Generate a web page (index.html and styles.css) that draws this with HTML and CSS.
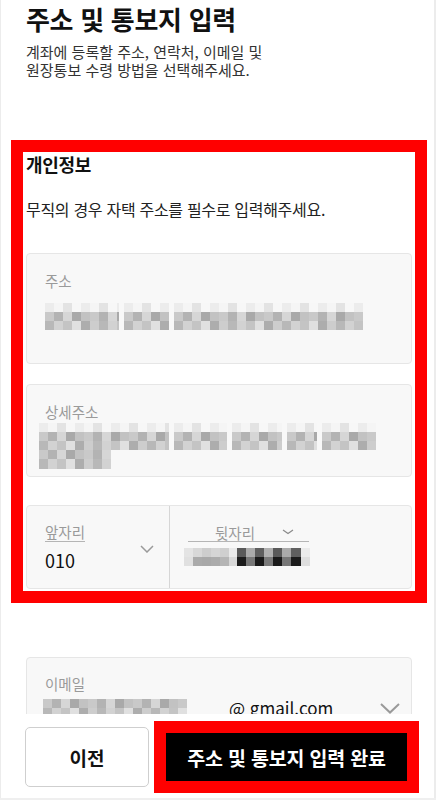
FILE: index.html
```html
<!DOCTYPE html>
<html lang="ko">
<head>
  <meta charset="UTF-8">
  <meta name="viewport" content="width=device-width, initial-scale=1.0">
  <title>주소 및 통보지 입력</title>
  <link rel="stylesheet" href="styles.css">
</head>
<body>

<div class="page">
  <!-- Header -->
  <header class="head">
    <h1 class="title">주소 및 통보지 입력</h1>
    <p class="lead">계좌에 등록할 주소, 연락처, 이메일 및<br>원장통보 수령 방법을 선택해주세요.</p>
  </header>

  <!-- Personal info -->
  <section class="info">
    <h2 class="info-title">개인정보</h2>
    <p class="info-desc">무직의 경우 자택 주소를 필수로 입력해주세요.</p>

    <div class="field field-addr">
      <span class="field-label">주소</span>
      <div class="mask-line">
        <span class="mask-word" style="width:74px"></span>
        <span class="mask-word" style="width:45px"></span>
        <span class="mask-word" style="width:189px"></span>
      </div>
    </div>

    <div class="field field-detail">
      <span class="field-label">상세주소</span>
      <div class="mask-line mask-wide">
        <span class="mask-word" style="width:130px"></span>
        <span class="mask-word" style="width:53px"></span>
        <span class="mask-word" style="width:50px"></span>
        <span class="mask-word" style="width:30px"></span>
        <span class="mask-word" style="width:54px"></span>
      </div>
      <div class="mask-line mask-wide">
        <span class="mask-word mask-two" style="width:72px"></span>
      </div>
    </div>

    <div class="field phone">
      <div class="phone-front">
        <div class="phone-stack">
          <span class="field-label underline">앞자리</span>
          <span class="phone-value">010</span>
        </div>
        <svg class="chev" width="14" height="8" viewBox="0 0 14 8"><path d="M1 1l6 6 6-6" fill="none" stroke="#9a9a9a" stroke-width="1.5"/></svg>
      </div>
      <div class="phone-back">
        <div class="back-label">
          <span class="back-text">뒷자리</span>
          <svg width="12" height="6" viewBox="0 0 12 6"><path d="M1 1l5 3.5 5-3.5" fill="none" stroke="#8a8a8a" stroke-width="1.2"/></svg>
        </div>
        <div class="mask-digits"></div>
      </div>
    </div>
  </section>

  <!-- Email -->
  <div class="field email">
    <span class="field-label">이메일</span>
    <div class="email-row">
      <span class="mask-word mask-two" style="width:144px"></span>
      <span class="email-domain">@ gmail.com</span>
      <svg class="chev-lg" width="20" height="11" viewBox="0 0 20 11"><path d="M1 1l9 8.5 9-8.5" fill="none" stroke="#9a9a9a" stroke-width="2"/></svg>
    </div>
  </div>
</div>

<!-- Bottom actions -->
<div class="actions">
  <button type="button" class="btn-prev">이전</button>
  <div class="cta-outline">
    <button type="button" class="btn-done">주소 및 통보지 입력 완료</button>
  </div>
</div>

</body>
</html>
```

FILE: styles.css
```css
    body {
      font-family: "Noto Sans CJK KR", "Noto Sans", sans-serif;
      margin: 0;
      padding: 0;
      background-color: #fff;
      color: #111;
    }

    .page {
      min-height: 800px;
      box-sizing: border-box;
      padding-top: 4px;
      box-shadow: inset 1px 0 #ececec, inset -2px 0 #ececec;
    }

    .head {
      padding-left: 26px;
    }

    .title {
      margin: 0;
      font-size: 26px;
      line-height: 30px;
      font-weight: 700;
      letter-spacing: -0.3px;
      color: #111;
    }

    .lead {
      margin: 9px 0 0;
      font-size: 15px;
      line-height: 18px;
      color: #333;
    }

    /* personal info block (red outline) */
    .info {
      margin: 61px 9px 0 11px;
      border: 12px solid #ff0000;
      padding: 0 3px 2px;
      background: #fff;
    }

    .info-title {
      margin: 0;
      font-size: 18px;
      line-height: 24px;
      font-weight: 700;
      letter-spacing: -0.3px;
      color: #111;
    }

    .info-desc {
      margin: 22px 0 0;
      font-size: 16px;
      line-height: 22px;
      letter-spacing: -0.3px;
      color: #222;
    }

    .field {
      background: #f8f8f8;
      border: 1px solid #e6e6e6;
      border-radius: 4px;
      box-sizing: border-box;
    }

    .field-label {
      display: block;
      font-size: 14.5px;
      line-height: 20px;
      color: #9a9a9a;
    }

    .field-addr {
      margin-top: 33px;
      height: 111px;
      padding: 17px 18px 0;
    }

    .field-addr .mask-line {
      margin-top: 12px;
    }

    .field-detail {
      margin-top: 20px;
      height: 93px;
      padding: 17px 18px 0;
    }

    .field-detail .field-label {
      margin-bottom: 1px;
    }

    .mask-wide {
      margin-left: -6px;
    }

    /* pixelated (masked) text */
    .mask-line {
      display: flex;
      gap: 5px;
      height: 27px;
    }

    .mask-word {
      display: inline-block;
      height: 27px;
      background-image:
        repeating-linear-gradient(90deg, #ececec 0 9px, #f5f5f5 9px 18px, #e3e3e3 18px 27px, #f7f7f7 27px 36px),
        repeating-linear-gradient(90deg, #c9c9c9 0 9px, #b3b3b3 9px 18px, #d6d6d6 18px 27px, #a9a9a9 27px 36px, #c2c2c2 36px 45px),
        repeating-linear-gradient(90deg, #b8b8b8 0 9px, #d2d2d2 9px 18px, #c4c4c4 18px 27px, #e0e0e0 27px 36px, #adadad 36px 45px, #cdcdcd 45px 54px);
      background-size: 100% 9px;
      background-position: 0 0, 0 9px, 0 18px;
      background-repeat: no-repeat;
    }

    .mask-two {
      height: 19px;
      background-position: 0 -20px, 0 0, 0 9px;
      background-size: 100% 9px, 100% 9px, 100% 10px;
    }

    .mask-line .mask-two {
      height: 19px;
    }

    /* phone */
    .phone {
      margin-top: 28px;
      height: 84px;
      display: flex;
    }

    .phone-front {
      width: 143px;
      border-right: 1.5px solid #d6d6d6;
      display: flex;
      align-items: center;
      justify-content: space-between;
      padding: 0 15px 0 18px;
      box-sizing: border-box;
    }

    .phone-stack {
      margin-top: -4px;
    }

    .underline {
      display: inline-block;
      font-size: 14.5px;
      line-height: 18px;
      border-bottom: 1px solid #b5b5b5;
    }

    .phone-value {
      display: block;
      margin-top: 6px;
      font-size: 18px;
      line-height: 22px;
      color: #111;
    }

    .chev {
      margin-top: 3px;
    }

    .phone-back {
      flex: 1;
      padding: 17px 0 0 18px;
    }

    .back-label {
      width: 121px;
      box-sizing: border-box;
      display: flex;
      align-items: center;
      height: 19px;
      border-bottom: 1px solid #b5b5b5;
      padding-right: 15px;
    }

    .back-text {
      flex: 1;
      text-align: center;
      font-size: 14.5px;
      color: #9a9a9a;
    }

    .mask-digits {
      margin: 6px 0 0 -4px;
      width: 126px;
      height: 18px;
      background-image:
        linear-gradient(90deg, #e4e4e4 0 9px, #d8d8d8 9px 18px, #cdcdcd 18px 27px, #d5d5d5 27px 36px, #cfcfcf 36px 45px, #eaeaea 45px 53px, #5a5a5a 53px 62px, #ababab 62px 71px, #5f5f5f 71px 80px, #b0b0b0 80px 89px, #5a5a5a 89px 98px, #aaaaaa 98px 107px, #606060 107px 117px, #ebebeb 117px 126px),
        linear-gradient(90deg, #e0e0e0 0 9px, #aaaaaa 9px 18px, #a8a8a8 18px 27px, #ababab 27px 36px, #b5b5b5 36px 45px, #d8d8d8 45px 53px, #1c1c1c 53px 62px, #787878 62px 71px, #1a1a1a 71px 80px, #7a7a7a 80px 89px, #1a1a1a 89px 98px, #777777 98px 107px, #1c1c1c 107px 117px, #dedede 117px 126px);
      background-size: 100% 9px;
      background-position: 0 0, 0 9px;
      background-repeat: no-repeat;
    }

    /* email */
    .email {
      margin: 54px 24px 0 26px;
      height: 92px;
      padding: 16px 11px 0 18px;
    }

    .email-row {
      display: flex;
      align-items: center;
      margin-top: 3px;
    }

    .email-row .mask-word {
      margin-left: -2px;
    }

    .email-domain {
      margin-left: 42px;
      font-size: 17px;
      line-height: 22px;
      color: #111;
    }

    .chev-lg {
      margin-left: auto;
    }

    /* bottom buttons */
    .actions {
      position: fixed;
      left: 0;
      right: 0;
      bottom: 0;
      height: 86px;
      box-sizing: border-box;
      background: #fff;
      display: flex;
      align-items: center;
      gap: 5px;
      padding-left: 25px;
      box-shadow: inset 0 -2px #efefef, inset 1px 0 #ececec, inset -2px 0 #ececec;
    }

    .btn-prev {
      width: 124px;
      height: 60px;
      background: #fff;
      border: 1px solid #cfcfcf;
      border-radius: 5px;
      font-family: inherit;
      font-size: 19px;
      font-weight: 700;
      color: #111;
      cursor: pointer;
    }

    .cta-outline {
      border: 12px solid #ff0000;
      width: 241px;
      height: 48px;
    }

    .btn-done {
      display: block;
      width: 100%;
      height: 100%;
      background: #000;
      border: none;
      font-family: inherit;
      font-size: 19.5px;
      font-weight: 700;
      letter-spacing: -0.2px;
      color: #fff;
      cursor: pointer;
    }
```
